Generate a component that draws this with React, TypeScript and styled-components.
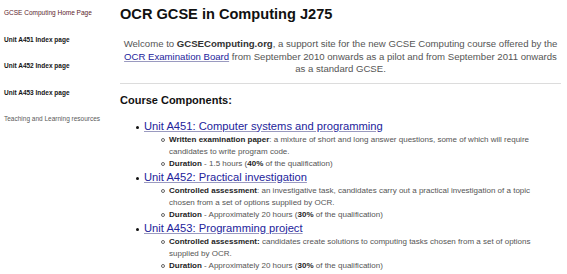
import React, { FC } from "react";
import styled, { createGlobalStyle } from "styled-components";

const GlobalStyle = createGlobalStyle`
  html, body {
    margin: 0;
    padding: 0;
    background: #ffffff;
    font-family: "Liberation Sans", Arial, sans-serif;
  }
`;

const Page = styled.div`
  display: flex;
  width: 567px;
  height: 274px;
  overflow: hidden;
`;

const Sidebar = styled.nav`
  width: 116px;
  flex-shrink: 0;
  padding: 9px 0 0 4px;
  box-sizing: border-box;
  display: flex;
  flex-direction: column;
  gap: 18.6px;
`;

const NavLink = styled.a<{ $tone: "current" | "unit" | "muted" }>`
  font-size: 6.5px;
  line-height: 8px;
  text-decoration: none;
  font-weight: ${(p) => (p.$tone === "unit" ? 600 : 400)};
  color: ${(p) =>
    p.$tone === "current" ? "#5c1e2c" : p.$tone === "unit" ? "#151515" : "#5a5a5a"};
`;

const Main = styled.main`
  flex: 1;
  padding: 4px 6px 0 4px;
`;

const Title = styled.h1`
  margin: 0;
  font-size: 14.6px;
  line-height: 20px;
  font-weight: bold;
  color: #111;
`;

const Intro = styled.p`
  margin: 14px 0 0;
  font-size: 9.6px;
  line-height: 12.5px;
  color: #555;
  text-align: center;
  b {
    color: #333;
  }
`;

const Link = styled.a`
  color: #23239b;
  text-decoration: underline;
  text-decoration-color: #9a9ac0;
`;

const Rule = styled.hr`
  margin: 7px 0 0;
  border: 0;
  border-top: 1px solid #dcdcdc;
`;

const Heading = styled.h2`
  margin: 9px 0 0;
  font-size: 11px;
  line-height: 15px;
  font-weight: bold;
  color: #111;
`;

const UnitList = styled.ul`
  margin: 11px 0 0;
  padding-left: 24px;
  list-style: none;
  color: #111;
`;

const Unit = styled.li`
  position: relative;
  font-size: 11.2px;
  line-height: 15px;
  &::before {
    content: "";
    position: absolute;
    left: -8px;
    top: 7px;
    width: 3px;
    height: 3px;
    border-radius: 50%;
    background: #111;
  }
`;

const DetailList = styled.ul`
  margin: 0;
  padding: 0 22px 0 25px;
  list-style: none;
  color: #555;
`;

const Detail = styled.li`
  position: relative;
  font-size: 8px;
  line-height: 12px;
  b {
    color: #1e1e1e;
  }
  &::before {
    content: "";
    position: absolute;
    left: -8px;
    top: 4.5px;
    width: 2px;
    height: 2px;
    border-radius: 50%;
    border: 1px solid #666;
  }
`;

type UnitInfo = {
  title: string;
  kind: string;
  text: string;
  duration: string;
  share: string;
};

const units: UnitInfo[] = [
  {
    title: "Unit A451: Computer systems and programming",
    kind: "Written examination paper",
    text:
      ": a mixture of short and long answer questions, some of which will require candidates to write program code.",
    duration: "1.5 hours",
    share: "40%",
  },
  {
    title: "Unit A452: Practical investigation",
    kind: "Controlled assessment",
    text:
      ": an investigative task, candidates carry out a practical investigation of a topic chosen from a set of options supplied by OCR.",
    duration: "Approximately 20 hours",
    share: "30%",
  },
  {
    title: "Unit A453: Programming project",
    kind: "Controlled assessment:",
    text:
      " candidates create solutions to computing tasks chosen from a set of options supplied by OCR.",
    duration: "Approximately 20 hours",
    share: "30%",
  },
];

const App: FC = () => {
  return (
    <Page>
      <GlobalStyle />
      <Sidebar>
        <NavLink $tone="current">GCSE Computing Home Page</NavLink>
        <NavLink $tone="unit">Unit A451 Index page</NavLink>
        <NavLink $tone="unit">Unit A452 Index page</NavLink>
        <NavLink $tone="unit">Unit A453 Index page</NavLink>
        <NavLink $tone="muted">Teaching and Learning resources</NavLink>
      </Sidebar>
      <Main>
        <Title>OCR GCSE in Computing J275</Title>
        <Intro>
          Welcome to <b>GCSEComputing.org</b>, a support site for the new GCSE
          Computing course offered by the <Link>OCR Examination Board</Link>{" "}
          from September 2010 onwards as a pilot and from September 2011
          onwards as a standard GCSE.
        </Intro>
        <Rule />
        <Heading>Course Components:</Heading>
        <UnitList>
          {units.map((u) => (
            <Unit key={u.title}>
              <Link>{u.title}</Link>
              <DetailList>
                <Detail>
                  <b>{u.kind}</b>
                  {u.text}
                </Detail>
                <Detail>
                  <b>Duration</b> - {u.duration} (<b>{u.share}</b> of the
                  qualification)
                </Detail>
              </DetailList>
            </Unit>
          ))}
        </UnitList>
      </Main>
    </Page>
  );
};

export default App;
